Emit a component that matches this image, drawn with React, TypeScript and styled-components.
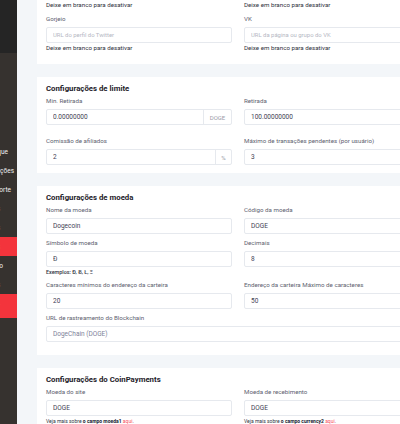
import styled, { createGlobalStyle } from "styled-components";

const GlobalStyle = createGlobalStyle`
  html, body {
    margin: 0;
    padding: 0;
    overflow: hidden;
    background: #f3f6f9;
    font-family: Roboto, "Liberation Sans", Arial, sans-serif;
  }
  * { box-sizing: border-box; }
`;

const Layout = styled.div`
  display: flex;
  width: 460px;
  height: 424px;
  overflow: hidden;
`;

const Sidebar = styled.aside`
  flex: 0 0 17px;
  display: flex;
  flex-direction: column;
  overflow: hidden;
  background: #36322f;
`;

const SidebarHead = styled.div`
  height: 53px;
  background: #252525;
`;

const Nav = styled.nav`
  padding-top: 89px;
  display: flex;
  flex-direction: column;
`;

const NavItem = styled.div<{ $end: number; $active?: boolean; $h?: number }>`
  display: flex;
  justify-content: flex-end;
  align-items: center;
  height: ${(p) => p.$h ?? 19}px;
  padding-right: ${(p) => 17 - p.$end}px;
  background: ${(p) => (p.$active ? "#f3343c" : "transparent")};
  color: #f1f1f1;
  font-size: 6.5px;
  white-space: nowrap;
`;

const Main = styled.main`
  flex: none;
  width: 422px;
  padding-left: 20px;
  display: flex;
  flex-direction: column;
  gap: 13px;
`;

const Card = styled.section<{ $top: number; $bottom: number; $shift?: number }>`
  background: #ffffff;
  padding: ${(p) => p.$top}px 9px ${(p) => p.$bottom}px;
  margin-top: ${(p) => p.$shift ?? 0}px;
`;

const CardTitle = styled.h3`
  margin: 0 0 1px;
  font-size: 7.8px;
  line-height: 12px;
  font-weight: 700;
  color: #1e2129;
`;

const Grid = styled.div<{ $rowGap: number }>`
  display: grid;
  grid-template-columns: 186px 186px;
  column-gap: 12px;
  row-gap: ${(p) => p.$rowGap}px;
`;

const Field = styled.div<{ $full?: boolean }>`
  grid-column: ${(p) => (p.$full ? "1 / -1" : "auto")};
`;

const Label = styled.label`
  display: block;
  font-size: 6.2px;
  line-height: 10px;
  color: #5e6270;
  margin-bottom: 3px;
`;

const InputGroup = styled.div<{ $h?: number }>`
  display: flex;
  height: ${(p) => p.$h ?? 16}px;
  border: 1px solid #e6e9ee;
  border-radius: 2px;
  background: #fff;
`;

const Input = styled.input<{ $muted?: boolean }>`
  flex: 1;
  min-width: 0;
  border: 0;
  outline: none;
  background: transparent;
  padding: 0 0 0 6px;
  font-family: inherit;
  font-size: 6.5px;
  color: ${(p) => (p.$muted ? "#7e8299" : "#3f4254")};
  &::placeholder {
    color: #b5b7c3;
    font-size: 5.9px;
  }
`;

const Addon = styled.span<{ $w: number }>`
  flex: 0 0 ${(p) => p.$w}px;
  display: flex;
  align-items: center;
  justify-content: center;
  border-left: 1px solid #e6e9ee;
  font-size: 6px;
  color: #9a9ca8;
`;

const Hint = styled.div<{ $size: number; $weight?: number }>`
  margin-top: 1px;
  font-size: ${(p) => p.$size}px;
  font-weight: ${(p) => p.$weight ?? 400};
  line-height: 8px;
  color: #2f3240;
  white-space: nowrap;
  b { color: #181c32; font-weight: 700; }
  span { color: #f64e60; }
`;

type FieldProps = {
  label: string;
  value?: string;
  placeholder?: string;
  addon?: string;
  addonWidth?: number;
  hint?: React.ReactNode;
  hintSize?: number;
  hintWeight?: number;
  full?: boolean;
  muted?: boolean;
  h?: number;
};

function FormField({
  label,
  value,
  placeholder,
  addon,
  addonWidth = 16,
  hint,
  hintSize = 6.2,
  hintWeight,
  full,
  muted,
  h,
}: FieldProps) {
  return (
    <Field $full={full}>
      <Label>{label}</Label>
      <InputGroup $h={h}>
        <Input readOnly value={value ?? ""} placeholder={placeholder} $muted={muted} />
        {addon && <Addon $w={addonWidth}>{addon}</Addon>}
      </InputGroup>
      {hint && (
        <Hint $size={hintSize} $weight={hintWeight}>
          {hint}
        </Hint>
      )}
    </Field>
  );
}

export default function App() {
  return (
    <>
      <GlobalStyle />
      <Layout>
        <Sidebar>
          <SidebarHead />
          <Nav>
            <NavItem $end={8}>Saque</NavItem>
            <NavItem $end={14}>Configurações</NavItem>
            <NavItem $end={11}>Suporte</NavItem>
            <NavItem $end={-20}>Usuários</NavItem>
            <NavItem $end={-20}>Páginas</NavItem>
            <NavItem $end={-20} $active>Moedas</NavItem>
            <NavItem $end={3}>Histórico</NavItem>
            <NavItem $end={-20}>Jogos</NavItem>
            <NavItem $end={-20} $active $h={24}>Sair</NavItem>
          </Nav>
        </Sidebar>

        <Main>
          <Card $top={0} $bottom={12} $shift={-29}>
            <Grid $rowGap={5}>
              <FormField label="Facebook" placeholder="URL da página do Facebook" hint="Deixe em branco para desativar" />
              <FormField label="Telegram" placeholder="URL do canal do Telegram" hint="Deixe em branco para desativar" />
              <FormField label="Gorjeio" placeholder="URL do perfil do Twitter" hint="Deixe em branco para desativar" />
              <FormField label="VK" placeholder="URL da página ou grupo do VK" hint="Deixe em branco para desativar" />
            </Grid>
          </Card>

          <Card $top={6} $bottom={8}>
            <CardTitle>Configurações de limite</CardTitle>
            <Grid $rowGap={11}>
              <FormField label="Min. Retirada" value="0.00000000" addon="DOGE" addonWidth={28} />
              <FormField label="Retirada" value="100.00000000" />
              <FormField label="Comissão de afiliados" value="2" addon="%" addonWidth={16} />
              <FormField label="Máximo de transações pendentes (por usuário)" value="3" />
            </Grid>
          </Card>

          <Card $top={6} $bottom={13}>
            <CardTitle>Configurações de moeda</CardTitle>
            <Grid $rowGap={4}>
              <FormField label="Nome da moeda" value="Dogecoin" />
              <FormField label="Código da moeda" value="DOGE" />
              <FormField label="Símbolo de moeda" value="Đ" hint="Exemplos: Đ, Ƀ, Ł, Ξ" hintSize={5.4} hintWeight={500} />
              <FormField label="Decimais" value="8" />
              <FormField label="Caracteres mínimos do endereço da carteira" value="20" />
              <FormField label="Endereço da carteira Máximo de caracteres" value="50" />
              <FormField label="URL de rastreamento do Blockchain" value="DogeChain (DOGE)" muted full />
            </Grid>
          </Card>

          <Card $top={6} $bottom={12}>
            <CardTitle>Configurações do CoinPayments</CardTitle>
            <Grid $rowGap={4}>
              <FormField
                label="Moeda do site"
                value="DOGE"
                hintSize={5}
                hint={<>Veja mais sobre <b>o campo moeda1</b> <span>aqui</span>.</>}
              />
              <FormField
                label="Moeda de recebimento"
                value="DOGE"
                hintSize={5}
                hint={<>Veja mais sobre <b>o campo currency2</b> <span>aqui</span>.</>}
              />
            </Grid>
          </Card>
        </Main>
      </Layout>
    </>
  );
}
